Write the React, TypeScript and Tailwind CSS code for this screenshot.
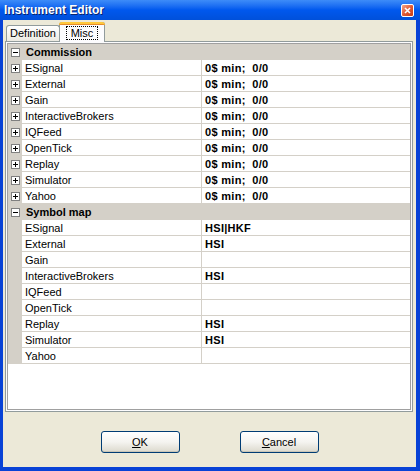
import React from "react";

const font = { fontFamily: '"Liberation Sans", Arial, sans-serif' };

const brokers = [
  "ESignal",
  "External",
  "Gain",
  "InteractiveBrokers",
  "IQFeed",
  "OpenTick",
  "Replay",
  "Simulator",
  "Yahoo",
];

const symbols: Record<string, string> = {
  ESignal: "HSI|HKF",
  External: "HSI",
  InteractiveBrokers: "HSI",
  Replay: "HSI",
  Simulator: "HSI",
};

function ToggleBox({ open }: { open: boolean }) {
  return (
    <svg width="9" height="9" viewBox="0 0 9 9" className="block">
      <rect x="0.5" y="0.5" width="8" height="8" fill="#fff" stroke="#808080" />
      <line x1="2" y1="4.5" x2="7" y2="4.5" stroke="#000" />
      {!open && <line x1="4.5" y1="2" x2="4.5" y2="7" stroke="#000" />}
    </svg>
  );
}

function Category({ title }: { title: string }) {
  return (
    <div className="flex h-[16px] bg-[#d4d0c8]">
      <div className="flex w-[14px] shrink-0 items-center justify-center">
        <ToggleBox open />
      </div>
      <div className="pl-[4px] text-[11px] font-bold leading-[17px] text-black">
        {title}
      </div>
    </div>
  );
}

function Row({
  label,
  value,
  expandable,
}: {
  label: string;
  value: string;
  expandable?: boolean;
}) {
  return (
    <div className="flex h-[16px]">
      <div className="flex w-[14px] shrink-0 items-center justify-center bg-[#d4d0c8]">
        {expandable ? <ToggleBox open={false} /> : null}
      </div>
      <div className="flex flex-1 border-b border-[#d4d0c8]">
        <div className="w-[180px] shrink-0 border-r border-[#d4d0c8] pl-[3px] text-[11px] leading-[16px] text-black">
          {label}
        </div>
        <div className="flex-1 whitespace-pre pl-[3px] text-[11px] font-bold leading-[16px] tracking-[0.3px] text-black">
          {value}
        </div>
      </div>
    </div>
  );
}

function XpButton({ children }: { children: React.ReactNode }) {
  return (
    <button
      type="button"
      className="h-[22px] w-[79px] rounded-[3px] border border-[#003c74] bg-gradient-to-b from-[#ffffff] via-[#f5f4f0] to-[#dcd9cd] text-[11px] text-black shadow-[inset_0_-1px_0_#c9c6b8]"
    >
      {children}
    </button>
  );
}

export default function App() {
  return (
    <div className="flex h-[471px] w-[420px] flex-col bg-[#0a3fd0]" style={font}>
      {/* title bar */}
      <div className="flex h-[20px] shrink-0 items-center justify-between bg-gradient-to-b from-[#3d8cf8] via-[#0058ee] to-[#0050da] pl-[4px] pr-[6px]">
        <span className="text-[12px] font-bold text-white [text-shadow:1px_1px_0_#0a246a]">
          Instrument Editor
        </span>
        <div className="flex h-[13px] w-[13px] items-center justify-center rounded-[2px] border border-white bg-gradient-to-br from-[#f0a58a] via-[#e25a33] to-[#c63b14]">
          <svg width="7" height="7" viewBox="0 0 7 7">
            <path d="M1 1 L6 6 M6 1 L1 6" stroke="#fff" strokeWidth="1.6" />
          </svg>
        </div>
      </div>

      {/* body */}
      <div className="flex flex-1 flex-col border-b-[4px] border-l-[3px] border-r-[4px] border-[#0842d6] bg-[#ece9d8]">
        {/* tabs */}
        <div className="flex h-[21px] items-end pl-[3px]">
          <div className="flex h-[16px] w-[54px] items-center justify-center rounded-t-[3px] border border-b-0 border-[#919b9c] bg-gradient-to-b from-white to-[#eceae2] text-[11px] text-black">
            Definition
          </div>
          <div className="relative z-10 -mb-[1px] -ml-[1px] flex h-[20px] w-[46px] flex-col rounded-t-[3px] border border-b-0 border-[#919b9c] bg-[#fcfcfe]">
            <div className="-mx-[1px] -mt-[1px] h-[3px] rounded-t-[3px] border-t-2 border-[#ffc83c] bg-[#e68b2c]" />
            <div className="flex flex-1 items-start justify-center pt-[1px]">
              <span className="border border-dotted border-black px-[4px] text-[11px] leading-[12px] text-black">
                Misc
              </span>
            </div>
          </div>
        </div>

        {/* tab panel */}
        <div className="ml-[2px] mr-[3px] flex h-[371px] flex-col border border-[#919b9c] bg-[#fcfcfe] p-[1px]">
          <div className="flex flex-1 flex-col border border-[#a0a0a0] bg-white">
            <Category title="Commission" />
            {brokers.map((b) => (
              <Row key={"c" + b} label={b} value="0$ min;  0/0" expandable />
            ))}
            <Category title="Symbol map" />
            {brokers.map((b) => (
              <Row key={"s" + b} label={b} value={symbols[b] ?? ""} />
            ))}
          </div>
        </div>

        {/* buttons */}
        <div className="mt-[19px] flex justify-center gap-[60px]">
          <XpButton>
            <span className="underline">O</span>K
          </XpButton>
          <XpButton>
            <span className="underline">C</span>ancel
          </XpButton>
        </div>
      </div>
    </div>
  );
}
